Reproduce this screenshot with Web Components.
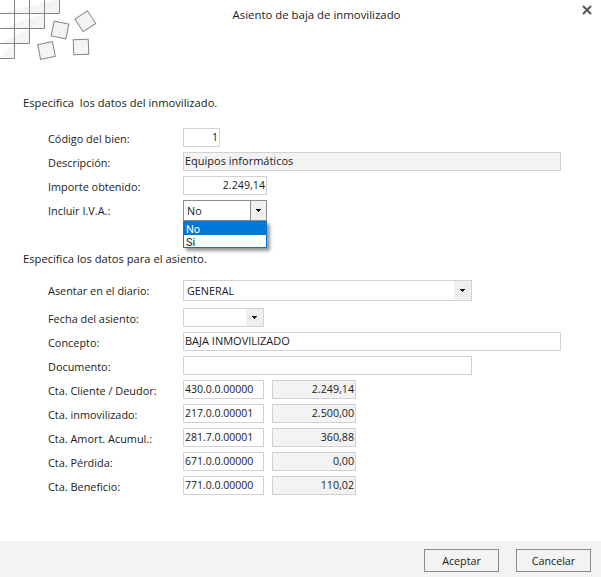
<!DOCTYPE html>
<html lang="es">
<head>
<meta charset="utf-8">
<title>Asiento de baja de inmovilizado</title>
<style>
  html, body { margin: 0; background: #fff; }
  body { font: 11px "Open Sans", "Noto Sans", sans-serif; color: #1a1a1a; }
</style>
</head>
<body>
<asiento-dialog>
  <span slot="title">Asiento de baja de inmovilizado</span>

  <section-title>Especifica&nbsp; los datos del inmovilizado.</section-title>
  <form-row label="Código del bien:"><text-field width="37" align="right">1</text-field></form-row>
  <form-row label="Descripción:"><text-field width="378" readonly>Equipos informáticos</text-field></form-row>
  <form-row label="Importe obtenido:"><text-field width="84" align="right">2.249,14</text-field></form-row>
  <form-row label="Incluir I.V.A.:" tall><select-field width="84" dark open value="No"></select-field></form-row>

  <section-title second>Especifica los datos para el asiento.</section-title>
  <form-row label="Asentar en el diario:" tall first><select-field width="289" value="GENERAL"></select-field></form-row>
  <form-row label="Fecha del asiento:"><select-field width="81" value=""></select-field></form-row>
  <form-row label="Concepto:"><text-field width="378">BAJA INMOVILIZADO</text-field></form-row>
  <form-row label="Documento:"><text-field width="289"></text-field></form-row>
  <form-row label="Cta. Cliente / Deudor:"><account-pair code="430.0.0.00000" amount="2.249,14"></account-pair></form-row>
  <form-row label="Cta. inmovilizado:"><account-pair code="217.0.0.00001" amount="2.500,00"></account-pair></form-row>
  <form-row label="Cta. Amort. Acumul.:"><account-pair code="281.7.0.00001" amount="360,88"></account-pair></form-row>
  <form-row label="Cta. Pérdida:"><account-pair code="671.0.0.00000" amount="0,00"></account-pair></form-row>
  <form-row label="Cta. Beneficio:"><account-pair code="771.0.0.00000" amount="110,02"></account-pair></form-row>

  <dialog-button slot="actions">Aceptar</dialog-button>
  <dialog-button slot="actions">Cancelar</dialog-button>
</asiento-dialog>

<script>
class AsientoDialog extends HTMLElement {
  constructor() {
    super();
    this.root = this.attachShadow({ mode: "open" });
    this.root.innerHTML = `
      <style>
        :host { display: flex; flex-direction: column; width: 601px; height: 577px; overflow: hidden; background: #fff; }
        header { display: flex; height: 60px; flex: none; }
        header svg.logo { width: 130px; height: 60px; flex: none; }
        .title { width: 373px; padding-top: 6px; height: 18px; line-height: 18px; text-align: center; font-size: 11.4px; }
        .close { margin: 5px 9px 0 auto; width: 10px; height: 10px; flex: none; }
        main { flex: 1; }
        footer { flex: none; height: 36px; background: #f3f3f3; display: flex; justify-content: flex-end; gap: 17px; padding: 8px 10px 0 0; box-sizing: border-box; }
      </style>
      <header>
        <svg class="logo" viewBox="0 0 130 60" fill="#f4f4f4" stroke="#858585" stroke-width="1">
          <path d="M0 13.500H59.500V-1M0 28.500H44.500V13.500M0 43.500H29.500V28.500M0 58.500H14.500V43.500M14.500 43.500V-1M29.500 28.500V-1M44.500 13.500V-1" />
          <rect x="-7.500" y="-7.500" width="15" height="15" transform="translate(60 30) rotate(12)" />
          <rect x="-7.500" y="-7.500" width="15" height="15" transform="translate(85.300 21.300) rotate(-33)" />
          <rect x="-7.500" y="-7.500" width="15" height="15" transform="translate(46.500 50.500) rotate(-11)" />
          <rect x="-7.500" y="-7.500" width="15" height="15" transform="translate(81 47) rotate(-2)" />
        </svg>
        <div class="title"><slot name="title"></slot></div>
        <svg class="close" viewBox="0 0 10 10" stroke="#555" stroke-width="2"><path d="M1 1L9 9M9 1L1 9"/></svg>
      </header>
      <main><slot></slot></main>
      <footer><slot name="actions"></slot></footer>`;
  }
}

class SectionTitle extends HTMLElement {
  constructor() {
    super();
    this.root = this.attachShadow({ mode: "open" });
    this.root.innerHTML = `
      <style>
        :host { display: block; height: 18px; line-height: 18px; margin: 34px 0 16px 23px; font-size: 11.2px; }
        :host([second]) { margin: 29px 0 12px 23px; }
      </style>
      <slot></slot>`;
  }
}

class FormRow extends HTMLElement {
  constructor() {
    super();
    this.root = this.attachShadow({ mode: "open" });
    this.root.innerHTML = `
      <style>
        :host { display: flex; align-items: center; height: 19px; margin-bottom: 5px; padding-left: 48px; }
        :host([tall]) { height: 21px; }
        :host([first]) { margin-bottom: 7px; }
        label { width: 135px; flex: none; padding-top: 2px; font-size: 10.9px; }
        :host([tall]) label { padding-top: 0; }
      </style>
      <label></label>
      <slot></slot>`;
  }

  connectedCallback() {
    this.root.querySelector("label").textContent = this.getAttribute("label");
  }
}

class TextField extends HTMLElement {
  constructor() {
    super();
    this.root = this.attachShadow({ mode: "open" });
    this.root.innerHTML = `
      <style>
        :host { display: block; box-sizing: border-box; height: 19px; line-height: 16px; padding: 0 1px; border: 1px solid #d2d2d2; white-space: nowrap; overflow: hidden; background: #fff; }
        :host([align="right"]) { text-align: right; font-size: 10.7px; }
        :host([mono]) { font-size: 10.5px; }
        :host([readonly]) { background: #f3f3f3; }
      </style>
      <slot></slot>`;
  }

  connectedCallback() {
    this.style.width = `${this.getAttribute("width")}px`;
  }
}

class SelectField extends HTMLElement {
  constructor() {
    super();
    this.root = this.attachShadow({ mode: "open" });
    this.root.innerHTML = `
      <style>
        :host { display: flex; position: relative; box-sizing: border-box; height: 100%; border: 1px solid #d2d2d2; background: #fff; font-size: 10.8px; }
        :host([dark]) { border-color: #8c8c8c; }
        .value { flex: 1; line-height: 19px; padding-left: 3px; }
        .arrow { width: 17px; flex: none; display: flex; align-items: center; justify-content: center; background: #f0f0f0; }
        :host([dark]) .arrow { width: 15px; border-left: 1px solid #8c8c8c; }
        .list { display: none; position: absolute; z-index: 2; left: -1px; right: -1px; top: calc(100% + 1px); height: 27px; box-sizing: border-box; border: 1px solid #0078d7; background: #fff; box-shadow: 3px 3px 3px rgba(0,0,0,.4); font-family: Roboto, sans-serif; font-size: 11px; line-height: 15px; }
        :host([open]) .list { display: block; }
        .list div { height: 13px; padding-left: 2px; }
        .list .on { background: #0078d7; color: #fff; }
      </style>
      <span class="value"></span>
      <span class="arrow"><svg width="5" height="3" viewBox="0 0 5 3" fill="#111" shape-rendering="crispEdges"><path d="M0 0H5V1H4V2H3V3H2V2H1V1H0Z"/></svg></span>
      <div class="list"><div class="on">No</div><div>Si</div></div>`;
  }

  connectedCallback() {
    this.style.width = `${this.getAttribute("width")}px`;
    this.root.querySelector(".value").textContent = this.getAttribute("value");
  }
}

class AccountPair extends HTMLElement {
  constructor() {
    super();
    this.root = this.attachShadow({ mode: "open" });
    this.root.innerHTML = `
      <style>
        :host { display: flex; gap: 8px; }
      </style>
      <text-field width="81" class="code" mono></text-field>
      <text-field width="84" class="amount" align="right" readonly></text-field>`;
  }

  connectedCallback() {
    this.root.querySelector(".code").textContent = this.getAttribute("code");
    this.root.querySelector(".amount").textContent = this.getAttribute("amount");
  }
}

class DialogButton extends HTMLElement {
  constructor() {
    super();
    this.root = this.attachShadow({ mode: "open" });
    this.root.innerHTML = `
      <style>
        :host { display: block; box-sizing: border-box; width: 75px; height: 23px; line-height: 23px; text-align: center; border: 1px solid #8c8c8c; background: #f3f3f3; font-size: 10.7px; }
      </style>
      <slot></slot>`;
  }
}

customElements.define("asiento-dialog", AsientoDialog);
customElements.define("section-title", SectionTitle);
customElements.define("form-row", FormRow);
customElements.define("text-field", TextField);
customElements.define("select-field", SelectField);
customElements.define("account-pair", AccountPair);
customElements.define("dialog-button", DialogButton);
</script>
</body>
</html>
